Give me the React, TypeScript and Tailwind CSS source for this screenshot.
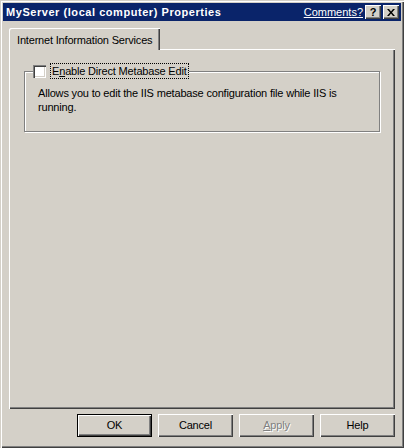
import React from "react";

const font = { fontFamily: '"Liberation Sans", Arial, sans-serif' };

function WinButton({
  children,
  primary,
  disabled,
}: {
  children: React.ReactNode;
  primary?: boolean;
  disabled?: boolean;
}) {
  const base =
    "w-[75px] h-[23px] flex items-center justify-center text-[11px] bg-[#d4d0c8]";
  const bevel = primary
    ? "border border-black shadow-[inset_1px_1px_0_#fff,inset_-1px_-1px_0_#404040,inset_-2px_-2px_0_#808080]"
    : "shadow-[inset_1px_1px_0_#fff,inset_-1px_-1px_0_#404040,inset_-2px_-2px_0_#808080]";
  return (
    <div className={`${base} ${bevel}`}>
      {disabled ? (
        <span className="text-[#808080] [text-shadow:1px_1px_0_#fff]">{children}</span>
      ) : (
        <span className="text-black">{children}</span>
      )}
    </div>
  );
}

function CaptionButton({ children }: { children: React.ReactNode }) {
  return (
    <div className="w-[16px] h-[14px] bg-[#d4d0c8] flex items-center justify-center text-[11px] font-bold text-black leading-none shadow-[inset_1px_1px_0_#fff,inset_-1px_-1px_0_#404040,inset_-2px_-2px_0_#808080]">
      {children}
    </div>
  );
}

export default function App() {
  return (
    <div
      className="w-[404px] h-[448px] bg-[#d4d0c8] p-[3px] flex flex-col shadow-[inset_1px_1px_0_#d4d0c8,inset_2px_2px_0_#fff,inset_-1px_-1px_0_#404040,inset_-2px_-2px_0_#808080]"
      style={font}
    >
      {/* Title bar */}
      <div className="h-[18px] bg-[#0a246a] flex items-center pl-[3px] pr-[2px]">
        <span className="text-white font-bold text-[11px] tracking-[0.55px]">
          MyServer (local computer) Properties
        </span>
        <span className="ml-auto text-white text-[11px] underline mr-[2px]">Comments?</span>
        <div className="flex gap-[2px]">
          <CaptionButton>?</CaptionButton>
          <CaptionButton>
            <svg width="8" height="7" viewBox="0 0 8 7">
              <path d="M0 0h2l2 2.5L6 0h2L5 3.5 8 7H6L4 4.5 2 7H0l3-3.5z" fill="#000" />
            </svg>
          </CaptionButton>
        </div>
      </div>

      {/* Body */}
      <div className="flex-1 flex flex-col pl-[6px] pr-[6px] pt-[7px] tracking-[-0.18px]">
        {/* Tab strip */}
        <div className="flex">
          <div className="relative z-10 h-[22px] -mb-px px-[8px] pt-[4px] bg-[#d4d0c8] text-[11px] text-black rounded-tl-[2px] shadow-[inset_1px_1px_0_#fff,inset_-1px_0_0_#404040,inset_-2px_0_0_#808080]">
            Internet Information Services
          </div>
        </div>

        {/* Tab panel */}
        <div className="h-[360px] shadow-[inset_1px_1px_0_#fff,inset_-1px_-1px_0_#404040,inset_-2px_-2px_0_#808080] px-[15px] pt-[22px]">
          <div className="relative h-[61px] border border-[#808080] shadow-[inset_1px_1px_0_#fff,1px_1px_0_#fff] pl-[13px] pt-[14px] text-[11px] text-black leading-[14px]">
            <div className="absolute -top-[8px] left-[8px] flex items-center bg-[#d4d0c8] pr-[1px]">
              <div className="w-[13px] h-[13px] bg-white shadow-[inset_1px_1px_0_#808080,inset_2px_2px_0_#404040,inset_-1px_-1px_0_#fff,inset_-2px_-2px_0_#d4d0c8]" />
              <span className="ml-[5px] px-[1px] outline outline-1 outline-dotted outline-black leading-[14px]">
                E<span className="underline">n</span>able Direct Metabase Edit
              </span>
            </div>
            <p>Allows you to edit the IIS metabase configuration file while IIS is</p>
            <p>running.</p>
          </div>
        </div>

        {/* Buttons */}
        <div className="flex justify-end gap-[6px] mt-[5px]">
          <WinButton primary>OK</WinButton>
          <WinButton>Cancel</WinButton>
          <WinButton disabled>
            <span className="underline">A</span>pply
          </WinButton>
          <WinButton>Help</WinButton>
        </div>
      </div>
    </div>
  );
}
